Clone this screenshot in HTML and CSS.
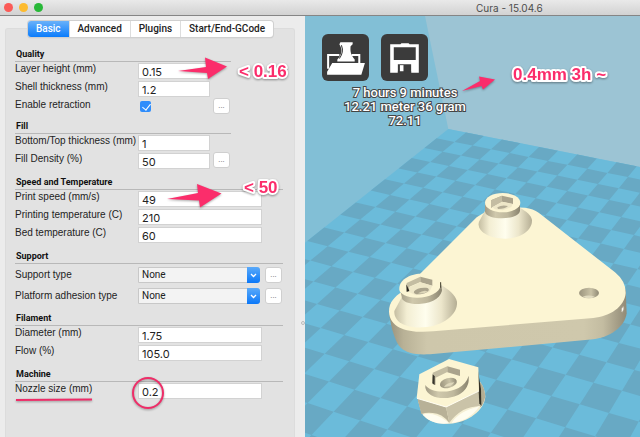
FILE: index.html
```html
<!DOCTYPE html>
<html lang="en">
<head>
<meta charset="utf-8">
<title>Cura - 15.04.6</title>
<link rel="stylesheet" href="styles.css">
</head>
<body>
<div class="window">
  <header class="titlebar">
    <div class="lights"><span class="light red"></span><span class="light yellow"></span><span class="light green"></span></div>
    <h1 class="title">Cura - 15.04.6</h1>
  </header>
  <main class="body">
    <aside class="sidebar">
      <div class="group">
        <nav class="tabs">
          <button class="tab active" type="button">Basic</button>
          <button class="tab" type="button">Advanced</button>
          <button class="tab" type="button">Plugins</button>
          <button class="tab" type="button">Start/End-GCode</button>
        </nav>
        <form class="form">
          <section class="section narrow">
            <h2>Quality</h2>
            <div class="row"><label for="layer">Layer height (mm)</label><input id="layer" type="text" value="0.15"></div>
            <div class="row"><label for="shell">Shell thickness (mm)</label><input id="shell" type="text" value="1.2"></div>
            <div class="row check"><label for="retract">Enable retraction</label><span class="slot"><input id="retract" type="checkbox" checked></span><button class="more" type="button" aria-label="Retraction settings">...</button></div>
          </section>
          <section class="section narrow">
            <h2>Fill</h2>
            <div class="row"><label for="thick">Bottom/Top thickness (mm)</label><input id="thick" type="text" value="1"></div>
            <div class="row"><label for="density">Fill Density (%)</label><input id="density" type="text" value="50"><button class="more" type="button" aria-label="Fill settings">...</button></div>
          </section>
          <section class="section">
            <h2>Speed and Temperature</h2>
            <div class="row"><label for="speed">Print speed (mm/s)</label><input id="speed" type="text" value="49"></div>
            <div class="row"><label for="ptemp">Printing temperature (C)</label><input id="ptemp" type="text" value="210"></div>
            <div class="row"><label for="btemp">Bed temperature (C)</label><input id="btemp" type="text" value="60"></div>
          </section>
          <section class="section">
            <h2>Support</h2>
            <div class="row pick"><label for="support">Support type</label><span class="select"><select id="support"><option>None</option></select><svg class="chevron" viewBox="0 0 13 16"><path d="M4 7l2.500 2.500L9 7"/></svg></span><button class="more" type="button" aria-label="Support settings">...</button></div>
            <div class="row pick"><label for="adhesion">Platform adhesion type</label><span class="select"><select id="adhesion"><option>None</option></select><svg class="chevron" viewBox="0 0 13 16"><path d="M4 7l2.500 2.500L9 7"/></svg></span><button class="more" type="button" aria-label="Adhesion settings">...</button></div>
          </section>
          <section class="section">
            <h2>Filament</h2>
            <div class="row"><label for="diameter">Diameter (mm)</label><input id="diameter" type="text" value="1.75"></div>
            <div class="row"><label for="flow">Flow (%)</label><input id="flow" type="text" value="105.0"></div>
          </section>
          <section class="section">
            <h2>Machine</h2>
            <div class="row"><label for="nozzle">Nozzle size (mm)</label><input id="nozzle" type="text" value="0.2"></div>
          </section>
        </form>
      </div>
    </aside>
    <div class="splitter"><span class="grip"></span></div>
    <section class="viewer">
      <svg class="scene" viewBox="305 16 335 421" preserveAspectRatio="xMinYMin slice">
        <defs>
          <linearGradient id="cone"><stop offset="0" stop-color="#c5bea2"/><stop offset=".2" stop-color="#f3eed3"/><stop offset=".5" stop-color="#fffeee"/><stop offset=".75" stop-color="#ece6cb"/><stop offset="1" stop-color="#b5ae94"/></linearGradient>
          <linearGradient id="collar"><stop offset="0" stop-color="#a39c85"/><stop offset=".3" stop-color="#cfc8ac"/><stop offset=".65" stop-color="#bfb89d"/><stop offset="1" stop-color="#8a846f"/></linearGradient>
          <linearGradient id="side"><stop offset="0" stop-color="#98917b"/><stop offset=".06" stop-color="#b8b196"/><stop offset=".16" stop-color="#cec7ab"/><stop offset=".82" stop-color="#cfc8ac"/><stop offset=".9" stop-color="#c3bca1"/><stop offset="1" stop-color="#918a76"/></linearGradient>
          <linearGradient id="hole"><stop offset="0" stop-color="#9b947e"/><stop offset=".6" stop-color="#c9c2a6"/><stop offset="1" stop-color="#8f8974"/></linearGradient>
        </defs>
        <path fill="#82bfd6" d="M305 16h335v421H305z"/>
        <path fill="#9cc4d4" d="M425 16L448.300 129 640 167V16z"/>
        <path id="floor-light" fill="#6bbbda"/>
        <path id="floor-dark" fill="#68a9c4"/>
        <g transform="translate(300 130) scale(.333333)">
          <path fill="url(#side)" d="M267 540C270 580 280 620 296 646C315 672 350 675 390 673L880 628C930 622 975 590 980 550L977 480z"/>
          <path fill="#fcf5d3" d="M362 430L530 262Q575 225 675 233Q700 236 716 248L945 427Q978 454 977 490C974 530 930 560 880 564L400 604C330 610 270 598 267 545C267 515 285 500 305 485z"/>
          <path fill="#fff" stroke="#a69f88" stroke-width="2" d="M964 545Q963 532 971 529 974 538 967 547z"/>
          <ellipse cx="867" cy="489" rx="30" ry="16" fill="url(#hole)"/>
          <path fill="#e1dbc0" d="M848 500Q866 493 884 500 867 509 848 500z"/>

          <path fill="url(#cone)" d="M556 240L537 275C528 305 570 327 617 326 665 324 697 300 696 270 693 255 680 245 660 233z"/>
          <path fill="url(#collar)" d="M555 220V245C560 272 655 272 660 242V216z"/>
          <ellipse cx="608" cy="218" rx="53" ry="29" fill="#fcf5d3"/>
          <path fill="#aaa38c" d="M573 211L606 197 639 205V222L606 215 573 233z"/>
          <path fill="#c4bda2" d="M573 211L606 197V215L573 233z"/>
          <path fill="#eee7c8" d="M577 231L606 215 638 222 634 231 608 241 585 238z"/>
          <path fill="#b3ac94" d="M592 232Q606 223 624 228 616 237 594 237z"/>

          <path fill="url(#cone)" d="M306 500L283 543C281 578 320 595 370 592 430 588 474 553 471 515 466 492 443 477 423 464z"/>
          <path fill="url(#collar)" d="M299 475L307 508C325 533 420 526 426 480L422 456z"/>
          <path fill="#fcf5d3" d="M298 480C295 450 330 431 362 431 395 432 422 444 422 466 419 490 384 504 350 503 320 502 300 492 298 480z"/>
          <path fill="#c4bda2" d="M320 459L361 440V456L328 470V487L320 482z"/>
          <path fill="#aaa38c" d="M361 440L397 449V467L361 457z"/>
          <path fill="#28251f" d="M319 463L328 482 320 486z"/>
          <path fill="#eee7c8" d="M328 472L361 457 397 467 388 486 348 496 331 488z"/>
          <ellipse cx="364" cy="483" rx="23" ry="9" transform="rotate(-12 364 483)" fill="#aaa38c"/>
          <path fill="#dcd5b8" d="M354 490Q372 478 383 484 374 493 354 490z"/>
          <path stroke="#44402f" stroke-width="3" d="M422 457V473"/>

          <path fill="#f5efd3" d="M355 815L365 850C380 872 410 884 448 881 505 878 553 840 556 800Q555 775 540 755z"/>
          <path fill="#b5ae94" d="M540 755Q557 776 555 803 550 825 540 832z"/>
          <path fill="#b8b197" d="M352 805L438 831 448 878Q425 850 398 849 378 847 364 852z"/>
          <path fill="#cac3a8" d="M438 831L537 782 543 827Q510 830 490 840 465 855 448 878z"/>
          <path fill="#fffdf0" d="M368 854Q402 844 440 874L446 880Q397 886 368 854zM455 879Q475 845 538 829 510 872 455 879z"/>
          <path fill="#353226" d="M532 712L543 777 544 828 538 820 536 785z"/>
          <path fill="#fcf5d3" d="M447 687L535 712 537 782 438 831 350 805 358 733z"/>
          <path fill="none" stroke="#fffdf2" stroke-width="3" d="M351 805L438 831 537 783"/>
          <path fill="url(#collar)" d="M376 765C395 795 490 795 506 737V752C500 815 385 820 376 773z"/>
          <path fill="#c4bda2" d="M398 728L442 709V726L407 743V765L398 762z"/>
          <path fill="#aaa38c" d="M442 709L480 719V738L442 727z"/>
          <path fill="#37342a" d="M398 733L404 739V765L397 760z"/>
          <ellipse cx="445" cy="759" rx="26" ry="15" transform="rotate(-15 445 759)" fill="url(#hole)"/>
          <path fill="#ded7bb" d="M432 771Q440 758 463 757 455 771 432 771z"/>
        </g>
      </svg>
      <div class="hud">
        <div class="tools">
          <button class="tool" type="button" aria-label="Load model">
            <svg viewBox="0 0 46 46"><path fill="none" stroke="#fff" stroke-width="2" d="M6 34V20.500h11M29 20.500h7.500V29"/><path fill="#fff" d="M18 8h12v2l-2 2c-.500 5 0 8 4 13v2H15v-2c4-4 5-9 3-13l-1-2zM10 28.500h32L38.500 40H5V37z"/><path stroke="#3b3b3b" d="M19 11c2 5 1 9-2 13" fill="none"/></svg>
          </button>
          <button class="tool" type="button" aria-label="Save toolpath">
            <svg viewBox="0 0 46 46"><path fill="#fff" fill-rule="evenodd" d="M9 10h10l1-1h7l1 1h9v28H9zM12.500 13v12.500h21.500V13zM16.500 29.500V38h13v-8.500z"/><path fill="#fff" d="M18.500 30.500h3.500V37h-3.500z"/><path fill="#3b3b3b" d="M16.500 36.500h13V39h-13z"/></svg>
          </button>
        </div>
        <p class="stats">7 hours 9 minutes<br>12.21 meter 36 gram<br>72.11</p>
      </div>
    </section>
  </main>
  <svg class="notes" viewBox="0 0 640 437">
    <g class="mark">
      <path d="M178 71L206 67 205 57.500 227 66.500 208 79 207 73z"/>
      <path d="M167 199L198 193 197 184 221.500 193.500 200 207.500 199 200.500z"/>
      <path d="M462 91L480 81 479 76.500 495 79.500 483 89.500 481.500 86z"/>
      <path class="line" d="M16 400L92 399.500"/>
      <circle class="line" cx="148" cy="393" r="15"/>
    </g>
    <text x="239" y="77">&lt; 0.16</text>
    <text x="244" y="193">&lt; 50</text>
    <text x="513" y="80">0.4mm 3h ~</text>
  </svg>
</div>
<script src="script.js"></script>
</body>
</html>
```
FILE: styles.css
```css
* { box-sizing: border-box; }
body { margin: 0; font-family: Roboto, "Liberation Sans", sans-serif; font-size: 10px; color: #222; }
h1, h2, p { margin: 0; }
button { font: inherit; color: inherit; padding: 0; }
.window { position: relative; display: flex; flex-direction: column; min-height: 100vh; background: #ececec; overflow: hidden; }
.titlebar { display: flex; align-items: center; height: 16px; background: linear-gradient(#e9e9e9, #d2d2d2); border-bottom: 1px solid #858585; }
.lights { display: flex; gap: 6px; padding-left: 4px; width: 305px; flex: none; }
.light { width: 9px; height: 9px; border-radius: 50%; }
.red { background: #fb5b57; }
.yellow { background: #fdbb2f; }
.green { background: #28b838; }
.title { font: 400 10px/14px Inter, sans-serif; color: #4c4c4c; padding-left: 171px; white-space: nowrap; }
.body { flex: 1; display: flex; }
.sidebar { flex: none; width: 300px; padding: 12px 5px 0; display: flex; }
.group { flex: 1; background: #e2e2e2; border-radius: 3px 3px 0 0; border: 1px solid #dcdcdc; border-width: 1px 1px 0; }
.tabs { display: flex; width: 245px; height: 16px; margin: -8px auto 0 22px; border-radius: 3px; background: #fff; box-shadow: 0 0 0 1px #d0d0d0, 0 1px 1px #aaa; overflow: hidden; }
.tab { flex: 1 1 auto; border: 0; border-left: 1px solid #ddd; background: none; line-height: 16px; font-weight: 500; }
.tab.active { border: 0; background: linear-gradient(#69b1fa, #0b7cfb); color: #fff; }
.form { padding: 5px 0 0 9px; }
.section { width: 268px; padding-top: 6px; }
.section.narrow { width: 216px; }
.section h2 { height: 14px; font: 700 9px/12px Roboto, sans-serif; color: #111; padding-left: 1px; border-bottom: 1px solid #b8b8b8; }
.row { display: flex; height: 18px; white-space: nowrap; }
.row label { width: 123px; flex: none; font: 10px/14px "Liberation Sans", sans-serif; }
.row input[type="text"] { width: 124px; height: 16px; margin: 1px 0 0; padding: 1px 3px 0; border: 1px solid #d2d2d2; border-radius: 0; background: #fff; font: 11px Inter, sans-serif; color: #222; }
.narrow .row input[type="text"], .slot { width: 72px; flex: none; }
.check { height: 16px; }
.slot { display: flex; align-items: center; padding-left: 2px; }
.slot input { appearance: none; width: 11px; height: 11px; margin: 0; border-radius: 2px; background: #2f8dfb; position: relative; }
.slot input::after { content: ""; position: absolute; left: 4px; top: 1px; width: 4px; height: 7px; border: solid #fff; border-width: 0 1px 1px 0; transform: rotate(38deg); }
.more { width: 17px; height: 16px; margin-left: 3px; border: 1px solid #cfcfcf; border-radius: 3px; background: #fff; font-size: 8px; line-height: 10px; color: #666; }
.pick { height: 21px; align-items: center; }
.select { position: relative; width: 124px; flex: none; display: flex; padding-right: 2px; }
.select select { appearance: none; flex: 1; height: 16px; padding: 0 3px; border: 1px solid #c8c8c8; border-radius: 0 3px 3px 0; background: #f3f3f3; font: inherit; color: #222; }
.chevron { position: absolute; right: 2px; top: 0; width: 13px; height: 16px; border-radius: 0 3px 3px 0; background: linear-gradient(#5aaafa, #0b78f8); fill: none; stroke: #fff; stroke-width: 1.300; }
.splitter { flex: none; width: 5px; display: flex; align-items: center; justify-content: center; background: #ededed; padding-top: 192px; }
.grip { width: 4px; height: 4px; border-radius: 50%; border: 1px solid #bbb; }
.viewer { flex: 1; position: relative; overflow: hidden; background: #6bbbda; }
.scene { position: absolute; inset: 0; width: 100%; height: 100%; }
.hud { position: relative; padding: 18px 0 0 17px; }
.tools { display: flex; gap: 12px; }
.tool { width: 47px; height: 47px; border: 0; border-radius: 6px; background: #3b3b3b; display: flex; }
.tool svg { width: 100%; height: 100%; }
.stats { width: 166px; padding-top: 5px; font: 500 13px/14px Roboto, sans-serif; text-align: center; color: #fff; -webkit-text-stroke: 2px #444; paint-order: stroke fill; }
.notes { position: absolute; left: 0; top: 0; width: 640px; height: 437px; pointer-events: none; }
.mark { fill: #fb2d6b; filter: drop-shadow(0 1px 1px #0005); }
.line { fill: none; stroke: #ee2d68; stroke-width: 2; }
.notes text { font: 700 17px "Liberation Sans", sans-serif; fill: #fb2d6b; stroke: #fff; stroke-width: 4px; stroke-linejoin: round; paint-order: stroke; filter: drop-shadow(0 1px 1px #0006); }
```
FILE: script.js
```js
// Projects the printer bed's checkerboard onto the view plane.
const project = (i, j) => {
  const w = 1 - 0.00714 * i - 0.01858 * j;
  const x = (448.3 + 14.29 * i - 19.81 * j) / w;
  const y = (129 + 2.543 * i + 6.722 * j) / w;
  return x.toFixed(1) + " " + y.toFixed(1);
};
const tile = (i, j, n) =>
  "M" + [project(i, j), project(i + n, j), project(i + n, j + n), project(i, j + n)].join("L") + "z";

let dark = "";
for (let i = 0; i < 26; i++) {
  for (let j = 0; j < 26; j++) {
    if ((i + j) % 2) dark += tile(i, j, 1);
  }
}
document.getElementById("floor-light").setAttribute("d", tile(0, 0, 26));
document.getElementById("floor-dark").setAttribute("d", dark);
```
